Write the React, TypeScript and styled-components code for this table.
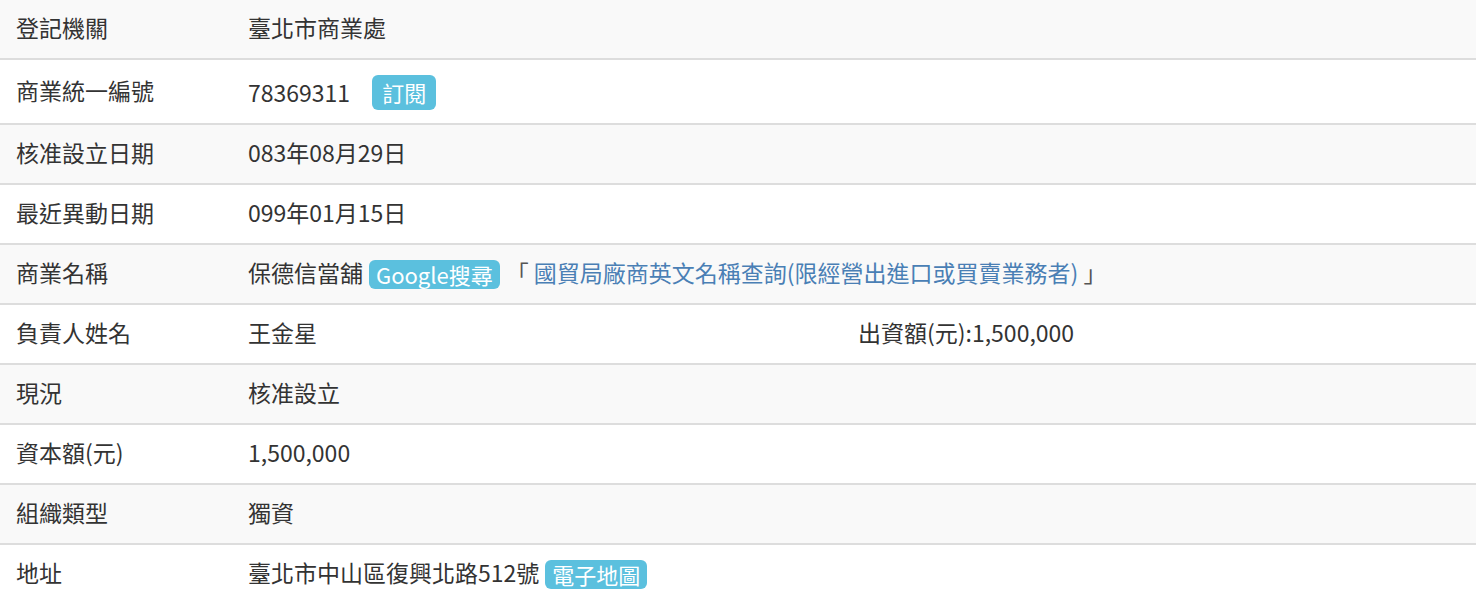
import React from "react";
import styled, { createGlobalStyle } from "styled-components";

const GlobalStyle = createGlobalStyle`
  html, body {
    margin: 0;
    padding: 0;
    background: #ffffff;
  }
  body {
    font-family: "Noto Sans CJK TC", "Noto Sans", sans-serif;
    color: #333333;
  }
`;

const Table = styled.table`
  width: 1476px;
  border-collapse: collapse;
  border-spacing: 0;
  font-size: 23px;
  line-height: 28px;
  color: #333333;
`;

const Row = styled.tr<{ $striped: boolean; $first?: boolean }>`
  background: ${(p) => (p.$striped ? "#f9f9f9" : "#ffffff")};
  border-top: ${(p) => (p.$first ? "none" : "2px solid #dddddd")};
`;

const LabelCell = styled.td`
  width: 200px;
  padding: 13px 16px 17px;
  vertical-align: middle;
  white-space: nowrap;
`;

const ValueCell = styled.td`
  padding: 13px 16px 17px;
  vertical-align: top;
`;

const Line = styled.div<{ $tall?: boolean }>`
  display: flex;
  align-items: center;
  height: ${(p) => (p.$tall ? "29px" : "28px")};
  padding-top: ${(p) => (p.$tall ? "4px" : "0")};
  white-space: nowrap;
`;

const Badge = styled.span`
  display: inline-block;
  background: #5bc0de;
  color: #ffffff;
  font-size: 22px;
  line-height: 29px;
  height: 29px;
  padding: 0 7px;
  border-radius: 6px;
  margin-top: 4px;
`;

const SubscribeButton = styled.span`
  display: inline-block;
  background: #5bc0de;
  color: #ffffff;
  font-size: 22px;
  line-height: 35px;
  height: 35px;
  padding: 0 10px;
  border-radius: 6px;
  margin-left: 22px;
  margin-top: 2px;
`;

const Link = styled.span`
  color: #4a7fb5;
`;

const Bracket = styled.span`
  color: #555555;
  white-space: pre;
`;

const SplitValue = styled.div`
  display: grid;
  grid-template-columns: 610px 1fr;
  height: 28px;
`;

const Space = styled.span`
  display: inline-block;
  width: 6px;
`;

type Item = { label: string; value: React.ReactNode; tall?: boolean };

const items: Item[] = [
  { label: "登記機關", value: "臺北市商業處" },
  {
    label: "商業統一編號",
    tall: true,
    value: (
      <>
        78369311
        <SubscribeButton>訂閱</SubscribeButton>
      </>
    ),
  },
  { label: "核准設立日期", value: "083年08月29日" },
  { label: "最近異動日期", value: "099年01月15日" },
  {
    label: "商業名稱",
    value: (
      <>
        保德信當舖
        <Space />
        <Badge>Google搜尋</Badge>
        <Space />
        <Bracket>「 </Bracket>
        <Link>國貿局廠商英文名稱查詢(限經營出進口或買賣業務者)</Link>
        <Bracket> 」</Bracket>
      </>
    ),
  },
  {
    label: "負責人姓名",
    value: (
      <SplitValue>
        <span>王金星</span>
        <span>出資額(元):1,500,000</span>
      </SplitValue>
    ),
  },
  { label: "現況", value: "核准設立" },
  { label: "資本額(元)", value: "1,500,000" },
  { label: "組織類型", value: "獨資" },
  {
    label: "地址",
    value: (
      <>
        臺北市中山區復興北路512號
        <Space />
        <Badge>電子地圖</Badge>
      </>
    ),
  },
];

export default function App() {
  return (
    <>
      <GlobalStyle />
      <Table>
        <tbody>
          {items.map((item, i) => (
            <Row key={item.label} $striped={i % 2 === 0} $first={i === 0}>
              <LabelCell>{item.label}</LabelCell>
              <ValueCell>
                <Line $tall={item.tall}>{item.value}</Line>
              </ValueCell>
            </Row>
          ))}
        </tbody>
      </Table>
    </>
  );
}
